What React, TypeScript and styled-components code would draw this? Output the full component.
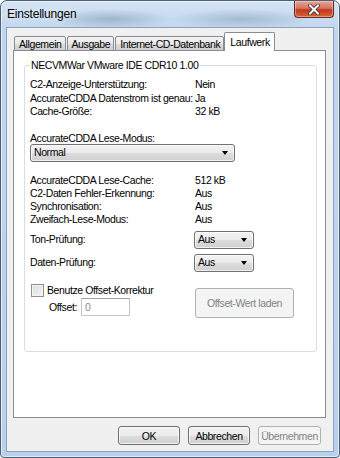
import React from "react";
import styled, { createGlobalStyle } from "styled-components";

const GlobalStyle = createGlobalStyle`
  html, body {
    margin: 0;
    padding: 0;
    background: #ffffff;
  }
  body {
    font-family: "Liberation Sans", Arial, sans-serif;
    font-size: 10.5px;
    letter-spacing: -0.4px;
    color: #000000;
  }
`;

const Window = styled.div`
  box-sizing: border-box;
  width: 340px;
  height: 458px;
  border: 1px solid #4b5e75;
  border-radius: 7px 7px 4px 4px;
  padding: 0 5px 5px 5px;
  display: flex;
  flex-direction: column;
  background:
    radial-gradient(ellipse 60px 10px at 110px 18px, rgba(90, 110, 130, 0.35), transparent),
    radial-gradient(ellipse 70px 10px at 240px 18px, rgba(90, 110, 130, 0.3), transparent),
    linear-gradient(180deg, #d3e3f4 0px, #c0d6ee 30px, #b9d1ec 100%);
  box-shadow: inset 0 0 0 1px rgba(255, 255, 255, 0.6);
`;

const TitleBar = styled.div`
  height: 26px;
  display: flex;
  align-items: flex-start;
`;

const Title = styled.div`
  padding: 6px 0 0 1px;
  font-size: 12px;
  letter-spacing: -0.2px;
  color: #000;
  text-shadow: 0 0 6px rgba(255, 255, 255, 0.9);
`;

const CloseButton = styled.div`
  margin-left: auto;
  width: 40px;
  height: 17px;
  box-sizing: border-box;
  border: 1px solid #6d2a22;
  border-top: none;
  border-radius: 0 0 4px 4px;
  background: linear-gradient(180deg, #e8a493 0%, #d47562 45%, #c0381f 55%, #d5652f 100%);
  display: flex;
  align-items: center;
  justify-content: center;
  box-shadow: inset 0 0 0 1px rgba(255, 255, 255, 0.35);
`;

const Client = styled.div`
  flex: 1;
  display: flex;
  flex-direction: column;
  border: 1px solid #8da2bb;
  background: #f0f0f0;
  padding: 5px 7px 0 6px;
`;

const TabStrip = styled.div`
  display: flex;
  align-items: flex-end;
  height: 18px;
  padding-left: 1px;
  position: relative;
  z-index: 1;
  margin-bottom: -1px;
`;

const Tab = styled.div<{ $active?: boolean }>`
  box-sizing: border-box;
  height: ${(p) => (p.$active ? "19px" : "15px")};
  margin-left: ${(p) => (p.$active ? "-1px" : "0")};
  margin-right: ${(p) => (p.$active ? "0" : "1px")};
  padding: ${(p) => (p.$active ? "3px 4px 0 5px" : "1px 3px 0 4px")};
  border: 1px solid #898c95;
  border-bottom: ${(p) => (p.$active ? "none" : "1px solid #898c95")};
  border-radius: 2px 2px 0 0;
  background: ${(p) =>
    p.$active ? "#ffffff" : "linear-gradient(180deg, #f2f2f2 0%, #ebebeb 50%, #dddddd 51%, #cfcfcf 100%)"};
  white-space: nowrap;
  line-height: 12px;
`;

const TabPanel = styled.div`
  box-sizing: border-box;
  height: 368px;
  border: 1px solid #898c95;
  background: #ffffff;
  padding: 8px 8px 0 10px;
`;

const Group = styled.fieldset`
  margin: 0;
  height: 293px;
  box-sizing: border-box;
  border: 1px solid #d5dfe5;
  border-radius: 3px;
  padding: 3px 5px 0 5px;
  min-width: 0;
`;

const Legend = styled.legend`
  padding: 0 1px;
  line-height: 13px;
  color: #000;
`;

const InfoGrid = styled.div<{ $top: number; $row: number }>`
  display: grid;
  grid-template-columns: 165px auto;
  grid-auto-rows: ${(p) => p.$row}px;
  line-height: 13px;
  margin-top: ${(p) => p.$top}px;
  white-space: nowrap;
`;

const Label = styled.div`
  line-height: 13px;
  white-space: nowrap;
`;

const SectionLabel = styled(Label)<{ $top: number }>`
  margin-top: ${(p) => p.$top}px;
`;

const Combo = styled.div<{ $width: number }>`
  box-sizing: border-box;
  width: ${(p) => p.$width}px;
  height: 18px;
  border: 1px solid #707070;
  border-radius: 3px;
  background: linear-gradient(180deg, #f2f2f2 0%, #ebebeb 50%, #dddddd 51%, #cfcfcf 100%);
  display: flex;
  align-items: center;
  padding: 0 6px 0 3px;
  box-shadow: inset 0 0 0 1px rgba(255, 255, 255, 0.7);
`;

const ComboText = styled.span`
  flex: 1;
  line-height: 13px;
`;

const Arrow = styled.span`
  width: 0;
  height: 0;
  border-left: 3.5px solid transparent;
  border-right: 3.5px solid transparent;
  border-top: 4px solid #000;
`;

const ModeCombo = styled(Combo)`
  margin-top: -1.5px;
`;

const ChoiceRow = styled.div<{ $top: number }>`
  display: grid;
  grid-template-columns: 164px auto;
  align-items: center;
  margin-top: ${(p) => p.$top}px;
`;

const OffsetArea = styled.div`
  display: grid;
  grid-template-columns: 164px auto;
  align-items: start;
  margin-top: 12px;
`;

const OffsetLeft = styled.div`
  display: flex;
  flex-direction: column;
`;

const CheckRow = styled.div`
  display: flex;
  align-items: center;
  gap: 3px;
  height: 13px;
  margin-left: 1px;
`;

const CheckBox = styled.span`
  box-sizing: border-box;
  width: 13px;
  height: 13px;
  border: 1px solid #8e8f8f;
  background: linear-gradient(135deg, #dcdcdc 0%, #f4f4f4 100%);
  box-shadow: inset 0 0 0 1px #f4f4f4;
`;

const OffsetRow = styled.div`
  display: flex;
  align-items: center;
  gap: 4px;
  margin-top: 1px;
  padding-left: 19px;
`;

const TextBox = styled.div`
  box-sizing: border-box;
  width: 49px;
  height: 18px;
  border: 1px solid #c2c5cb;
  border-top-color: #9da1a8;
  background: #fff;
  color: #8a8a8a;
  padding: 2px 3px;
  line-height: 12px;
`;

const Button = styled.div<{ $disabled?: boolean; $width: number; $height: number }>`
  box-sizing: border-box;
  width: ${(p) => p.$width}px;
  height: ${(p) => p.$height}px;
  border: 1px solid ${(p) => (p.$disabled ? "#adb2b5" : "#707070")};
  border-radius: 3px;
  background: ${(p) =>
    p.$disabled ? "#f4f4f4" : "linear-gradient(180deg, #f2f2f2 0%, #ebebeb 50%, #dddddd 51%, #cfcfcf 100%)"};
  color: ${(p) => (p.$disabled ? "#838383" : "#000")};
  display: flex;
  align-items: center;
  justify-content: center;
  box-shadow: ${(p) => (p.$disabled ? "none" : "inset 0 0 0 1px rgba(255,255,255,0.7)")};
  white-space: nowrap;
`;

const LoadButton = styled(Button)`
  margin-top: 4px;
  margin-left: 1px;
`;

const ButtonBar = styled.div`
  display: flex;
  justify-content: flex-end;
  gap: 8px;
  margin-top: 8px;
  padding-right: 5px;
`;

function Dropdown({ width, value }: { width: number; value: string }) {
  return (
    <Combo $width={width}>
      <ComboText>{value}</ComboText>
      <Arrow />
    </Combo>
  );
}

export default function App() {
  return (
    <>
      <GlobalStyle />
      <Window>
        <TitleBar>
          <Title>Einstellungen</Title>
          <CloseButton>
            <svg width="12" height="11" viewBox="0 0 12 11">
              <path d="M2 1.5 L10 9.5 M10 1.5 L2 9.5" stroke="#3a2a2a" strokeWidth="3.6" strokeLinecap="square" />
              <path d="M2 1.5 L10 9.5 M10 1.5 L2 9.5" stroke="#ffffff" strokeWidth="2" strokeLinecap="square" />
            </svg>
          </CloseButton>
        </TitleBar>
        <Client>
          <TabStrip>
            <Tab>Allgemein</Tab>
            <Tab>Ausgabe</Tab>
            <Tab>Internet-CD-Datenbank</Tab>
            <Tab $active>Laufwerk</Tab>
          </TabStrip>
          <TabPanel>
            <Group>
              <Legend>NECVMWar VMware IDE CDR10 1.00</Legend>
              <InfoGrid $top={3} $row={13.5}>
                <span>C2-Anzeige-Unterstützung:</span>
                <span>Nein</span>
                <span>AccurateCDDA Datenstrom ist genau:</span>
                <span>Ja</span>
                <span>Cache-Größe:</span>
                <span>32 kB</span>
              </InfoGrid>
              <SectionLabel $top={13.5}>AccurateCDDA Lese-Modus:</SectionLabel>
              <ModeCombo $width={205}>
                <ComboText>Normal</ComboText>
                <Arrow />
              </ModeCombo>
              <InfoGrid $top={12.5} $row={13}>
                <span>AccurateCDDA Lese-Cache:</span>
                <span>512 kB</span>
                <span>C2-Daten Fehler-Erkennung:</span>
                <span>Aus</span>
                <span>Synchronisation:</span>
                <span>Aus</span>
                <span>Zweifach-Lese-Modus:</span>
                <span>Aus</span>
              </InfoGrid>
              <ChoiceRow $top={4.5}>
                <Label>Ton-Prüfung:</Label>
                <Dropdown width={60} value="Aus" />
              </ChoiceRow>
              <ChoiceRow $top={5}>
                <Label>Daten-Prüfung:</Label>
                <Dropdown width={60} value="Aus" />
              </ChoiceRow>
              <OffsetArea>
                <OffsetLeft>
                  <CheckRow>
                    <CheckBox />
                    <span>Benutze Offset-Korrektur</span>
                  </CheckRow>
                  <OffsetRow>
                    <span>Offset:</span>
                    <TextBox>0</TextBox>
                  </OffsetRow>
                </OffsetLeft>
                <LoadButton $disabled $width={99} $height={30}>
                  Offset-Wert laden
                </LoadButton>
              </OffsetArea>
            </Group>
          </TabPanel>
          <ButtonBar>
            <Button $width={62} $height={19}>OK</Button>
            <Button $width={62} $height={19}>Abbrechen</Button>
            <Button $disabled $width={63} $height={19}>Übernehmen</Button>
          </ButtonBar>
        </Client>
      </Window>
    </>
  );
}
